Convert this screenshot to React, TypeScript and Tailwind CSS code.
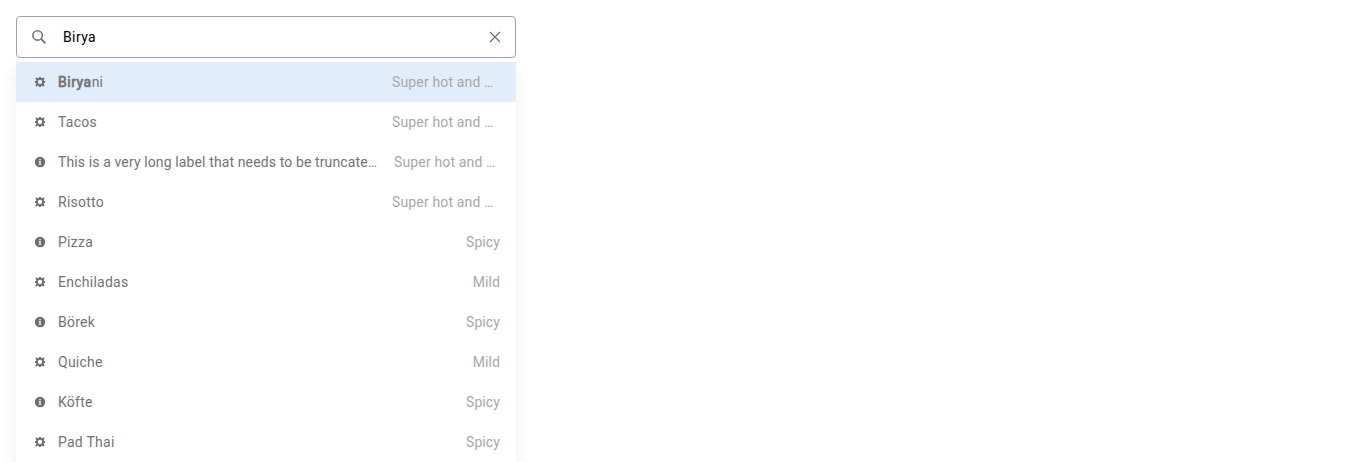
import React from "react";

type Item = { label: string; kind: "gear" | "info"; meta: string };

const items: Item[] = [
  { label: "Biryani", kind: "gear", meta: "Super hot and spicy" },
  { label: "Tacos", kind: "gear", meta: "Super hot and spicy" },
  { label: "This is a very long label that needs to be truncated for display", kind: "info", meta: "Super hot and spicy" },
  { label: "Risotto", kind: "gear", meta: "Super hot and spicy" },
  { label: "Pizza", kind: "info", meta: "Spicy" },
  { label: "Enchiladas", kind: "gear", meta: "Mild" },
  { label: "Börek", kind: "info", meta: "Spicy" },
  { label: "Quiche", kind: "gear", meta: "Mild" },
  { label: "Köfte", kind: "info", meta: "Spicy" },
  { label: "Pad Thai", kind: "gear", meta: "Spicy" },
];

const query = "Birya";

function GearIcon() {
  return (
    <svg width="12" height="12" viewBox="0 0 12 12" fill="none" stroke="#6e6e6e">
      <circle cx="6" cy="6" r="3.1" strokeWidth="1.9" />
      <path d="M6 .9v2M6 9.1v2M.9 6h2M9.1 6h2M2 2l1.5 1.5M8.5 8.5l1.5 1.5M2 10l1.5-1.5M8.5 3.5l1.5-1.5" strokeWidth="2" />
    </svg>
  );
}

function InfoIcon() {
  return (
    <svg width="12" height="12" viewBox="0 0 12 12">
      <circle cx="6" cy="6" r="5.2" fill="#6e6e6e" />
      <path d="M5.3 3h1.4v1.2H5.3zM4.8 5h1.9v3h.6v.8H4.7V8h.6V5.8h-.5z" fill="#fff" />
    </svg>
  );
}

function Row({ item, active }: { item: Item; active: boolean }) {
  const matches = item.label.startsWith(query);
  const long = item.label.length > 40;
  const longMeta = item.meta.length > 8;
  return (
    <li className={`flex h-10 items-center pr-4 pl-[18px] ${active ? "bg-[#e1edfb]" : ""}`}>
      <span className="mr-3 shrink-0">{item.kind === "gear" ? <GearIcon /> : <InfoIcon />}</span>
      <span className={`max-w-[322px] truncate text-[#737373] ${long ? "tracking-[0.12px]" : ""}`}>
        {matches ? <><span className="tracking-[0.5px] [-webkit-text-stroke:0.7px_#737373]">{query}</span>{item.label.slice(query.length)}</> : item.label}
      </span>
      <span className={`ml-auto shrink-0 truncate text-[#a8a8a8] ${longMeta ? (long ? "w-[106px] tracking-[0.15px]" : "w-[108px] tracking-[0.15px]") : "tracking-[0.1px]"}`}>{item.meta}</span>
    </li>
  );
}

export default function App() {
  return (
    <main className="h-[462px] overflow-hidden bg-white p-4 font-['Roboto',sans-serif] text-sm tracking-[0.25px]">
      <div className="flex h-[42px] w-[500px] items-center rounded-[4px] border border-[#a1a1a1] px-[14px]">
        <svg width="16" height="16" viewBox="0 0 16 16" fill="none" stroke="#757575" strokeWidth="1.6">
          <circle cx="6.6" cy="6.4" r="4.7" />
          <path d="m10 9.8 4.5 4.5" strokeWidth="1.8" />
        </svg>
        <span className="ml-4 flex-1 tracking-[0.4px] text-black">{query}</span>
        <svg width="12" height="12" viewBox="0 0 12 12" fill="none" stroke="#6e6e6e" strokeWidth="1.2">
          <path d="m1 1 10 10M11 1 1 11" />
        </svg>
      </div>
      <ul className="mt-1 h-[400px] w-[500px] bg-white shadow-[0_8px_16px_rgba(0,0,0,0.08)]">
        {items.map((item, index) => <Row key={item.label} item={item} active={index === 0} />)}
      </ul>
    </main>
  );
}
